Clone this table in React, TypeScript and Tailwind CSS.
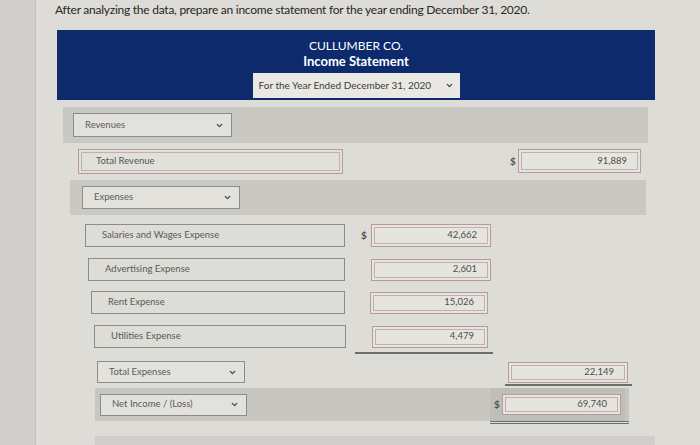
import { ChevronDown } from 'lucide-react';

const font = { fontFamily: 'Lato, "Open Sans", sans-serif' };

function SelectBox({ label, className }: { label: string; className: string }) {
  return (
    <div
      className={`flex items-center justify-between border border-[#8a8c87] bg-[#e2e1dc] pl-[11px] pr-[7px] text-[9.5px] text-[#5a5a58] ${className}`}
    >
      <span>{label}</span>
      <ChevronDown size={9} strokeWidth={3.5} className="text-[#444]" />
    </div>
  );
}

function LabelBox({ label, className }: { label: string; className: string }) {
  return (
    <div
      className={`flex items-center border border-[#8a8c87] bg-[#dddcd6] pl-[16px] text-[9.5px] text-[#5a5a58] ${className}`}
    >
      {label}
    </div>
  );
}

function AmountBox({ value, className }: { value: string; className: string }) {
  return (
    <div className={`border border-[#b99a9b] p-[2px] bg-[#e6e4df] ${className}`}>
      <div className="flex h-full items-center justify-end border border-[#c6aeae] pr-[10px] text-[9.5px] text-[#4c4c4a]">
        {value}
      </div>
    </div>
  );
}

export default function App() {
  return (
    <div className="flex h-[445px] w-[700px] overflow-hidden bg-[#dcdbd6]" style={font}>
      <div className="w-[36px] shrink-0 border-r border-[#c3c2be] bg-[#cfceca]" />
      <div className="flex-1 bg-[#dedcd7]">
        <p className="pl-[19px] pt-[2px] text-[12px] leading-[16px] tracking-[-0.25px] text-[#262626]">
          After analyzing the data, prepare an income statement for the year ending December 31, 2020.
        </p>

        <div className="ml-[21px] mt-[12px] flex h-[70px] w-[598px] flex-col items-center bg-[#0c2a6c] pt-[8px] text-white">
          <div className="text-[12px] leading-[15px]">CULLUMBER CO.</div>
          <div className="text-[13px] font-bold leading-[17px]">Income Statement</div>
          <div className="mt-[3px] flex h-[25px] w-[207px] items-center justify-between bg-[#eae8e2] pl-[6px] pr-[6px] text-[10px] text-[#3c3c3c]">
            <span>For the Year Ended December 31, 2020</span>
            <ChevronDown size={9} strokeWidth={3.5} className="text-[#444]" />
          </div>
        </div>

        {/* Revenues */}
        <div className="ml-[27px] mt-[7px] flex h-[36px] w-[585px] items-center bg-[#c9c8c3] pl-[10px]">
          <SelectBox label="Revenues" className="h-[24px] w-[159px]" />
        </div>

        <div className="ml-[42px] mt-[4px] flex h-[28px] items-center">
          <div className="h-[25px] w-[265px] border border-[#b99a9b] bg-[#e2e0db] p-[2px]">
            <div className="flex h-full items-center border border-[#c6aeae] pl-[14px] text-[9.5px] text-[#555]">
              Total Revenue
            </div>
          </div>
          <span className="ml-[167px] w-[8px] text-[10px] font-bold text-[#555]">$</span>
          <AmountBox value="91,889" className="h-[24px] w-[123px]" />
        </div>

        {/* Expenses */}
        <div className="ml-[34px] mt-[5px] flex h-[35px] w-[576px] items-center bg-[#c9c8c3] pl-[12px]">
          <SelectBox label="Expenses" className="h-[23px] w-[158px]" />
        </div>

        <div className="ml-[49px] mt-[9px] flex h-[23px] items-center">
          <LabelBox label="Salaries and Wages Expense" className="h-[23px] w-[260px]" />
          <span className="ml-[16px] w-[10px] text-[10px] font-bold text-[#555]">$</span>
          <AmountBox value="42,662" className="h-[23px] w-[120px]" />
        </div>

        <div className="ml-[52px] mt-[11px] flex h-[23px] items-center">
          <LabelBox label="Advertising Expense" className="h-[23px] w-[257px]" />
          <div className="w-[26px]" />
          <AmountBox value="2,601" className="h-[22px] w-[120px]" />
        </div>

        <div className="ml-[55px] mt-[10px] flex h-[23px] items-center">
          <LabelBox label="Rent Expense" className="h-[23px] w-[254px]" />
          <div className="w-[25px]" />
          <AmountBox value="15,026" className="h-[22px] w-[118px]" />
        </div>

        <div className="ml-[58px] mt-[11px] flex h-[23px] items-center">
          <LabelBox label="Utilities Expense" className="h-[23px] w-[252px]" />
          <div className="w-[26px]" />
          <AmountBox value="4,479" className="h-[22px] w-[116px]" />
        </div>
        <div className="ml-[319px] mt-[4px] h-[2px] w-[138px] bg-[#6e6e6b]" />

        {/* Total Expenses */}
        <div className="ml-[61px] mt-[6px] flex h-[24px] items-center">
          <SelectBox label="Total Expenses" className="h-[22px] w-[148px]" />
          <div className="w-[263px]" />
          <AmountBox value="22,149" className="h-[21px] w-[120px]" />
        </div>
        <div className="ml-[469px] mt-[0px] h-[2px] w-[127px] bg-[#6e6e6b]" />

        {/* Net Income */}
        <div className="ml-[59px] mt-[2px] flex h-[33px] w-[534px] items-center bg-[#c7c6c1] pl-[5px]">
          <SelectBox label="Net Income / (Loss)" className="h-[22px] w-[147px]" />
          <div className="w-[243px]" />
          <div className="flex h-[33px] items-center bg-[#bfbeb9] pl-[4px] pr-[4px]">
            <span className="w-[8px] text-[10px] font-bold text-[#555]">$</span>
            <AmountBox value="69,740" className="h-[21px] w-[119px]" />
          </div>
        </div>
        <div className="ml-[454px] h-[3px] w-[139px] border-y border-[#6e6e6b]" />

        <div className="ml-[59px] mt-[12px] h-[20px] w-[560px] bg-[#cfceca]" />
      </div>
    </div>
  );
}
